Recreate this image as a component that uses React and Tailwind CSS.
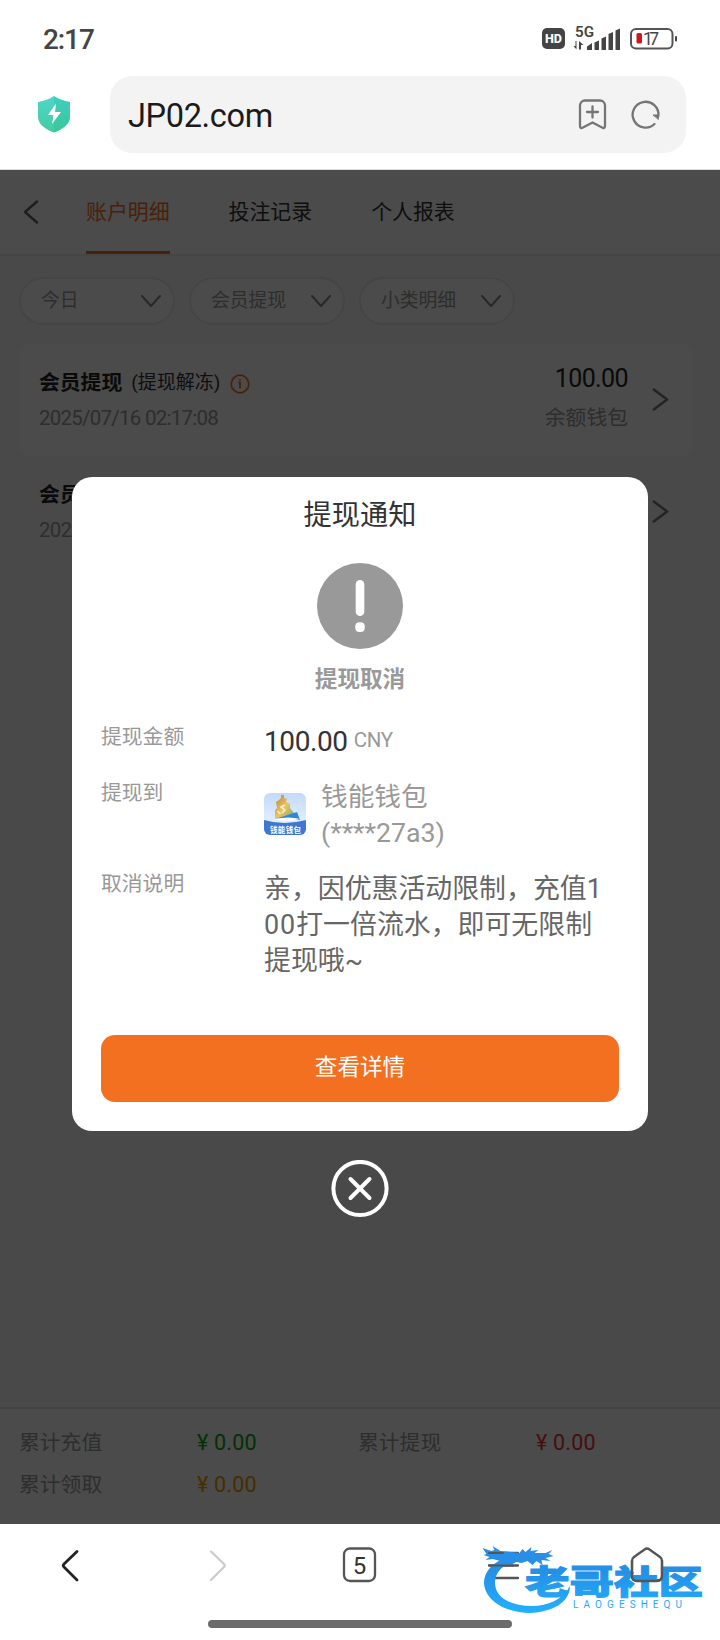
const tabs = ["账户明细", "投注记录", "个人报表"];
const filters = ["今日", "会员提现", "小类明细"];

const Chevron = ({ d, className, width = 2.5 }) => (
  <svg viewBox="0 0 24 24" className={className} fill="none" stroke="currentColor" strokeWidth={width} strokeLinecap="round" strokeLinejoin="round">
    <path d={d} />
  </svg>
);

function StatusBar() {
  return (
    <div className="flex h-[76px] items-center justify-between pl-[43px] pr-[42px] text-[#444]">
      <span className="pt-[3px] text-[28px] font-medium leading-none tracking-[-1.1px]">2:17</span>
      <svg width="136" height="30" viewBox="542 24 136 30" className="mt-0.5">
        <rect x="542" y="28" width="23" height="21" rx="5" fill="#444" />
        <text x="545" y="43" fontSize="12" fontWeight="800" fill="#fff" textLength="17" lengthAdjust="spacingAndGlyphs">HD</text>
        <text x="575" y="37" fontSize="14" fontWeight="600" fill="#444" textLength="19" lengthAdjust="spacingAndGlyphs">5G</text>
        <g fill="#444">
          <path d="M576.5 41v8.500l-3-3.500h2v-5zM579 49.500v-8.500l4.500 4h-2.500v4.500z" />
          <path d="M587 46.500l5-3.500v7h-5zM594.500 42.500l4.500-2v9.500h-4.500zM601.500 38.500l4.500-2v13.500h-4.500zM608.500 34l4.500-2v18h-4.500zM615.500 30.500l4.500-2v21.500h-4.500z" />
          <rect x="675" y="36" width="2" height="5.500" rx="1" />
        </g>
        <rect x="631" y="29" width="41.500" height="19.500" rx="5" fill="none" stroke="#555" strokeWidth="2" />
        <rect x="636.500" y="33" width="5.500" height="10.500" rx="1.500" fill="#d0161f" />
        <text x="643" y="44.700" fontSize="17.500" fill="#444" textLength="16">17</text>
      </svg>
    </div>
  );
}

function AddressBar() {
  return (
    <div className="flex h-[77px] items-center pl-[37px] pr-[34px]">
      <svg width="34" height="38" viewBox="0 0 34 38" className="-mt-0.5 mr-[39px]">
        <defs>
          <linearGradient id="shield" x1="0" y1="0" x2="0" y2="1">
            <stop offset="0" stopColor="#4fd6cb" />
            <stop offset="1" stopColor="#41cd9e" />
          </linearGradient>
        </defs>
        <path d="M17 1C21 4 27 6 33 7v15c0 8-9 13-16 15.500C10 35 1 30 1 22V7C7 6 13 4 17 1z" fill="url(#shield)" />
        <path d="M17 1C21 4 27 6 33 7v15c0 8-9 13-16 15.500z" fill="#24bd9c" opacity=".3" />
        <path d="M19 8.500L11 20h5.500l-1.500 9 9-12h-6z" fill="#fff" />
      </svg>
      <div className="flex h-full flex-1 items-center rounded-[22px] bg-[#f3f3f3] pl-[18px] pr-[25px]">
        <span className="flex-1 pt-1 text-[32.500px] leading-none tracking-[-0.350px] text-[#1b1b1b]">JP02.com</span>
        <svg width="84" height="34" viewBox="577 97 84 34" fill="none" stroke="#757575" strokeWidth="2.300" strokeLinecap="round" strokeLinejoin="round" className="-mt-0.5">
          <path d="M585 100.500h15a5 5 0 0 1 5 5v20.500q0 3-3 1.500l-9.500-5-9.500 5q-3 1.500-3-1.500v-20.500a5 5 0 0 1 5-5zM587 112h11M592.500 106.500v11" />
          <path d="M654.500 124a12.900 12.900 0 1 1 3.900-8" />
          <path d="M653.500 115h4.800v4z" fill="#757575" strokeWidth="1" />
        </svg>
      </div>
    </div>
  );
}

function RecordCard({ note }) {
  return (
    <div className="flex h-28 items-center rounded-lg px-[19px]">
      <div className="flex-1">
        <div className="flex h-[30px] items-center pt-[5px]">
          <span className="text-[20.8px] font-bold text-[#222]">会员提现</span>
          {note && <span className="ml-[9px] text-[19px] text-[#333]">({note})</span>}
          {note && (
            <svg width="20" height="20" viewBox="0 0 20 20" className="ml-[10px] text-[#f37021]" fill="none" stroke="currentColor" strokeWidth="1.800">
              <circle cx="10" cy="10" r="8.800" />
              <path d="M8.500 8.500H10v6M10 5v1.500" />
            </svg>
          )}
        </div>
        <div className="mt-[6px] h-[32px] text-[20.500px] leading-[33px] tracking-[-0.750px] text-[#999]">2025/07/16 02:17:08</div>
      </div>
      <div className="flex flex-col items-end">
        <span className="-mt-1 h-[38px] text-[25px] leading-[35px] tracking-[-0.600px] text-[#222]">100.00</span>
        <span className="h-9 text-[20.800px] leading-[38px] text-[#999]">余额钱包</span>
      </div>
      <Chevron d="M7 2l14 10.500L7 23" className="-mt-0.5 ml-[19px] mr-[3px] h-[26px] w-[23px] text-[#777]" />
    </div>
  );
}

function Summary({ label, value, color }) {
  return (
    <div className="flex h-[42px] items-center">
      <span className="w-[178px] pt-0.5 text-[20.800px] text-[#999]">{label}</span>
      <span className={`text-[21.500px] tracking-[0.200px] ${color}`}>¥ {value}</span>
    </div>
  );
}

function AccountPage() {
  return (
    <div className="flex h-full flex-col bg-[#f5f5f5]">
      <div className="flex h-[86px] shrink-0 items-center border-b-2 border-[#e6e6e6] bg-[#fafafa] pl-[19px]">
        <Chevron d="M18 1.500L6 12l12 10.500" className="mr-[43px] h-[26px] w-6 text-[#666]" />
        <div className="flex h-full gap-[59px]">
          {tabs.map((t, i) => (
            <div
              key={t}
              className={i === 0
                ? "box-content flex h-[77px] items-center border-b-[3px] border-[#f37021] pt-[4px] text-[20.900px] text-[#f37021]"
                : "flex h-[81px] items-center pt-[4px] text-[20.900px] text-[#333]"}
            >
              {t}
            </div>
          ))}
        </div>
      </div>

      <div className="flex gap-[14px] px-[19px] pt-[21px]">
        {filters.map((f) => (
          <div key={f} className="flex h-12 w-[156px] items-center justify-between rounded-full border-2 border-[#e6e6e6] bg-[#fafafa] pl-5 pr-[10px] text-[18.800px] text-[#999]">
            <span>{f}</span>
            <Chevron d="M3 7l9 10 9-10" width={2} className="h-6 w-6 text-[#888]" />
          </div>
        ))}
      </div>

      <div className="mx-5 mt-[19px] w-[672px] flex-1">
        <div className="rounded-lg bg-[#fafafa]"><RecordCard note="提现解冻" /></div>
        <RecordCard />
      </div>

      <div className="grid h-[117px] grid-cols-[339px_1fr] content-start border-t-2 border-[#e2e2e2] bg-[#fafafa] pl-[19px] pt-[13px]">
        <Summary label="累计充值" value="0.00" color="text-[#00a810]" />
        <Summary label="累计提现" value="0.00" color="text-[#e83535]" />
        <Summary label="累计领取" value="0.00" color="text-[#e89a00]" />
      </div>
    </div>
  );
}

function WalletIcon() {
  return (
    <svg width="42" height="42" viewBox="0 0 42 42">
      <defs>
        <linearGradient id="sky" x1="0" y1="0" x2="0" y2="1">
          <stop offset="0" stopColor="#c3dafa" />
          <stop offset="1" stopColor="#f0f7ff" />
        </linearGradient>
        <linearGradient id="gold" x1="0" y1="0" x2="1" y2="1">
          <stop offset="0" stopColor="#b9803a" />
          <stop offset=".5" stopColor="#ecc463" />
          <stop offset="1" stopColor="#7fa57c" />
        </linearGradient>
        <clipPath id="tile"><rect width="42" height="42" rx="6" /></clipPath>
      </defs>
      <g clipPath="url(#tile)">
        <rect width="42" height="42" fill="url(#sky)" />
        <path d="M17 2h3v3l3 1-1 3 4 2v4l4 5-2 3-17 3v-9l2-2-1-6 3-2 2-2z" fill="url(#gold)" />
        <path d="M21 12l-4 2 4 3-3 3M13.500 18l3 3" stroke="#fff3c4" strokeWidth="1.600" fill="none" />
        <path d="M11 26l22-7 3 8-11-1z" fill="#2f86d6" />
        <path d="M0 27q20 6 42 0v15H0z" fill="#3f77d2" />
        <path d="M9 26q12 4 27 0-10-3-27 0z" fill="#fff" />
        <text x="6" y="39.500" fontSize="7.500" fontWeight="700" fill="#fff" textLength="31">钱能钱包</text>
      </g>
    </svg>
  );
}

function WithdrawDialog() {
  return (
    <div className="flex h-[654px] w-[576px] flex-col rounded-[20px] bg-white px-[29px] pb-[29px]">
      <h2 className="mt-[19px] text-center text-[28.200px] leading-[40px] text-[#333]">提现通知</h2>
      <svg width="86" height="86" viewBox="0 0 86 86" className="mx-auto mt-[27px] shrink-0">
        <circle cx="43" cy="43" r="43" fill="#999" />
        <rect x="38.700" y="17" width="8.600" height="36" rx="4.300" fill="#fff" />
        <rect x="38.300" y="59.200" width="9.400" height="9.800" rx="4" fill="#fff" />
      </svg>
      <p className="mt-[15px] text-center text-[22.600px] font-bold leading-8 text-[#999]">提现取消</p>

      <div className="mt-[23px] grid grid-cols-[163px_1fr] text-[20.800px] text-[#999]">
        <span className="h-[57px] leading-[36px]">提现金额</span>
        <div className="flex leading-[45px]">
          <span className="text-[28px] tracking-[-0.400px] text-[#333]">100.00</span>
          <span className="ml-1.5 text-[20.500px] leading-[42px] tracking-[-0.300px]">CNY</span>
        </div>
        <span className="leading-[34px]">提现到</span>
        <div className="flex h-[91px]">
          <div className="mt-[17px]"><WalletIcon /></div>
          <div className="ml-[15px] mt-[3px] text-[26.700px] leading-[36px]">
            钱能钱包<br />(****27a3)
          </div>
        </div>
        <span className="leading-[34px]">取消说明</span>
        <div className="mt-[4px] whitespace-nowrap text-[26.900px] leading-[36px] text-[#666]">
          亲，因优惠活动限制，充值1<br />
          <span className="tracking-[1px]">00</span>打一倍流水，即可无限制<br />
          提现哦~
        </div>
      </div>

      <button className="mt-auto h-[67px] w-[518px] rounded-[14px] bg-[#f37021] pb-px text-[22.600px] text-white">查看详情</button>
    </div>
  );
}

function Watermark() {
  return (
    <svg width="230" height="76" viewBox="478 1540 230 76" className="absolute left-[478px] top-[1540px]">
      <defs>
        <linearGradient id="blue" gradientUnits="userSpaceOnUse" x1="0" y1="1545" x2="0" y2="1612">
          <stop offset="0" stopColor="#2c8de8" />
          <stop offset=".4" stopColor="#2490e6" />
          <stop offset="1" stopColor="#22b0ff" />
        </linearGradient>
      </defs>
      <g fill="url(#blue)">
        <path d="M514 1555C494 1560 484 1571 484 1583C485 1602 508 1613 530 1613C553 1612 570 1602 570 1586C562 1600 548 1606 532 1606C510 1606 495 1597 495 1583C495 1572 503 1564 518 1561z" />
        <path d="M482.500 1548l9 3 3-1-2-4 8 5 11 1 8 1 3-4 3 3 6-5-1 4 8-1-4 3 11 0 7-3-4 4 5 2-8 2 5 3-9-1 1 5-6-4-4 4-5-4-6 2-5-1-6 3-5-1-8 2 3-5-8-2-7 1 4-3-6-2 3-1z" />
        <text x="525" y="1594" fontSize="33" fontWeight="900" textLength="178" lengthAdjust="spacingAndGlyphs" stroke="url(#blue)" strokeWidth="1">老哥社区</text>
        <text x="573" y="1608" fontSize="10" textLength="109" lengthAdjust="spacing">LAOGESHEQU</text>
      </g>
      <path d="M489 1553h14M489 1565.500h24M498 1578h20" stroke="#555" strokeWidth="2" strokeLinecap="round" />
      <path d="M632 1560v16q0 5 5 5h20q5 0 5-5v-16" fill="none" stroke="#555" strokeWidth="2.300" />
    </svg>
  );
}

function BrowserNav() {
  return (
    <div className="flex h-[116px] flex-col items-center justify-between bg-white pb-[12px] pt-[21px]">
      <svg width="720" height="42" viewBox="0 1545 720 42" fill="none" stroke="#555" strokeWidth="2.300" strokeLinecap="round" strokeLinejoin="round">
        <path d="M77 1551.500L64 1564q-1.500 1.500 0 3L77 1580" stroke="#222" strokeWidth="2.800" />
        <path d="M211 1551.500L224 1564q1.500 1.500 0 3L211 1580" stroke="#ccc" />
        <rect x="344" y="1548.500" width="31" height="32.500" rx="6" />
        <text x="359.500" y="1573.500" textAnchor="middle" fontSize="24" fill="#333" stroke="none">5</text>
        <path d="M489 1553h29M489 1565.500h29M489 1578h29" />
        <path d="M634 1557l10.500-7.500q2.500-2 5 0l10.500 7.500q2 1.500 2 4v14.500q0 5-5 5h-20q-5 0-5-5v-14.500q0-2.500 2-4z" />
      </svg>
      <div className="h-2 w-[304px] rounded-full bg-[#6b6b6b]" />
    </div>
  );
}

export default function App() {
  return (
    <div lang="zh-CN" className="relative flex h-[1640px] w-[720px] flex-col overflow-hidden bg-white font-[Roboto,'Noto_Sans_CJK_SC',sans-serif]">
      <StatusBar />
      <AddressBar />
      <div className="h-[17px] border-b border-[#ddd]" />
      <div className="relative h-[1354px]">
        <AccountPage />
        <div className="absolute inset-0 flex flex-col items-center bg-black/70 pt-[307px]">
          <WithdrawDialog />
          <svg width="58" height="58" viewBox="0 0 58 58" className="mt-[29px]" fill="none" stroke="#fff" strokeWidth="4" strokeLinecap="round">
            <circle cx="29" cy="28.500" r="26.600" />
            <path d="M19.500 19l19 19M38.500 19l-19 19" />
          </svg>
        </div>
      </div>
      <BrowserNav />
      <Watermark />
    </div>
  );
}
